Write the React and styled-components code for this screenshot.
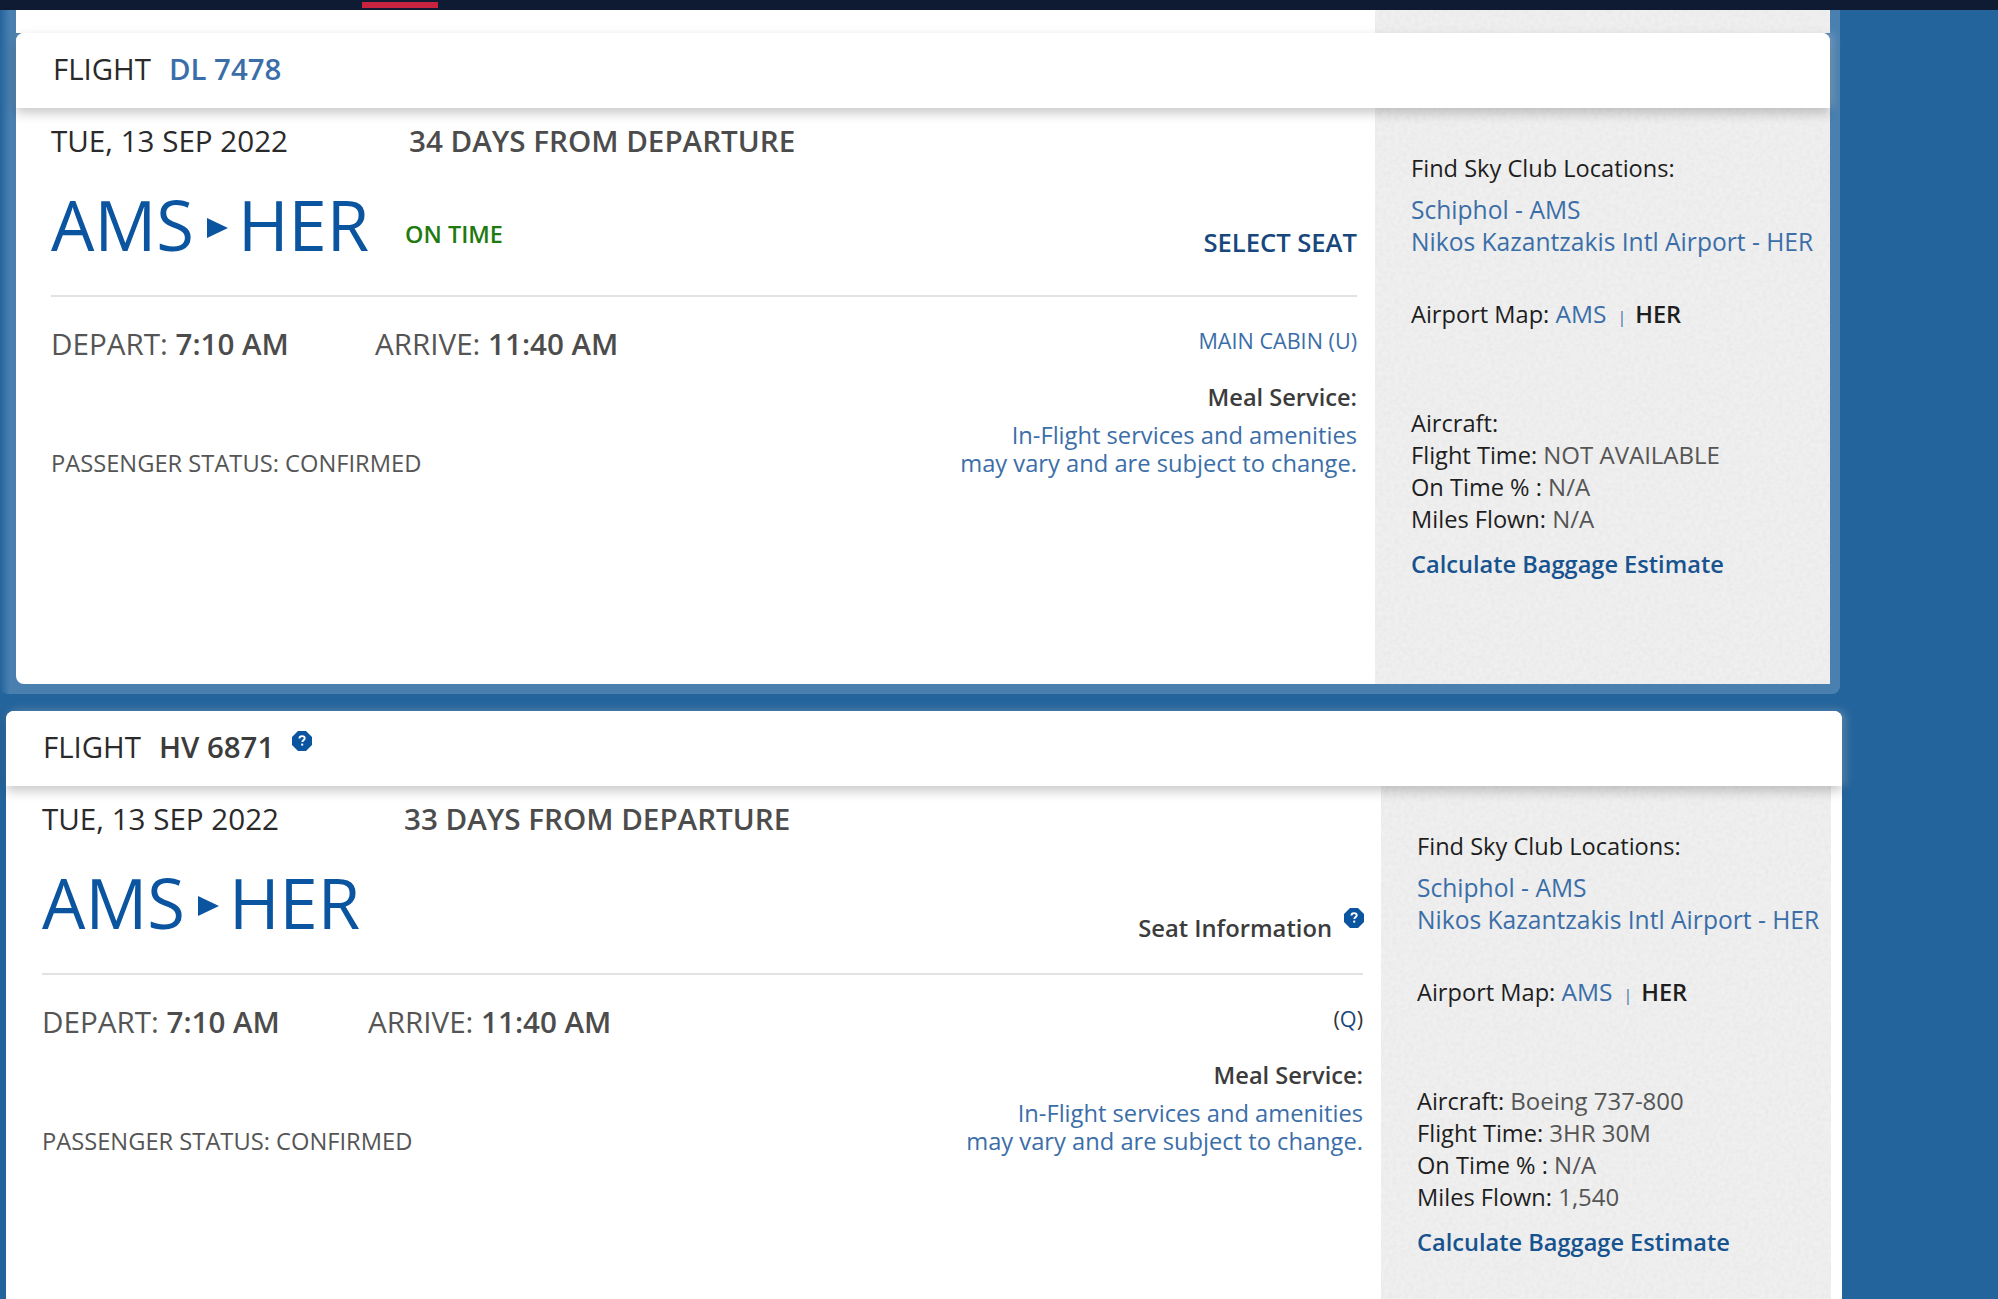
import { createGlobalStyle, styled } from "styled-components";

const GlobalStyle = createGlobalStyle`
  html, body { margin: 0; padding: 0; height: 100%; overflow: hidden; background: #24649c; }
  body { font-family: "Open Sans", "Liberation Sans", sans-serif; color: #222; }
  * { box-sizing: border-box; }
`;

const noise = `url("data:image/svg+xml,%3Csvg xmlns='http://www.w3.org/2000/svg' width='240' height='240'%3E%3Cfilter id='n'%3E%3CfeTurbulence type='fractalNoise' baseFrequency='.25' numOctaves='3'/%3E%3CfeColorMatrix values='0 0 0 0 .5 0 0 0 0 .5 0 0 0 0 .5 0 0 0 .22 -.06'/%3E%3C/filter%3E%3Crect width='240' height='240' filter='url(%23n)'/%3E%3C/svg%3E")`;

const Page = styled.div`
  height: 1299px;
  overflow: hidden;
  background: #24649c;
`;

const TopBar = styled.div`
  height: 10px;
  background: #0f1a33;
  padding: 2px 0 0 362px;
`;

const RedTab = styled.div`
  width: 76px;
  height: 6px;
  background: #c8233f;
`;

const Wrapper = styled.div`
  width: 1840px;
  padding: 0 10px 10px 16px;
  background: linear-gradient(90deg, #24649c 0, #4a80b0 10px);
  border-radius: 0 0 8px 8px;
`;

const PrevCard = styled.div`
  display: grid;
  grid-template-columns: 1359px 1fr;
  height: 23px;
  background: #fff;
`;

const Textured = styled.div`
  background-color: #f0f0f0;
  background-image: ${noise};
`;

const Card = styled.section`
  width: ${(p) => p.$width}px;
  margin: ${(p) => p.$margin};
  background: #fff;
  border-radius: 8px;
`;

const CardHeader = styled.header`
  display: flex;
  align-items: center;
  height: 75px;
  padding: 0 0 3px ${(p) => p.$indent}px;
  background: #fff;
  border-radius: 8px 8px 0 0;
  box-shadow: 0 5px 12px rgba(0, 0, 0, 0.22), 3px 0 10px rgba(255, 255, 255, 0.3);
  position: relative;
  font-size: 29.4px;
  color: #2a2a2a;
`;

const FlightLabel = styled.span`
  margin-right: 18px;
`;

const FlightNumber = styled.span`
  font-weight: 600;
  color: ${(p) => (p.$link ? "#3b6ea8" : "#3c3c3c")};
`;

const HeaderHelp = styled.span`
  display: inline-flex;
  margin: -13px 0 0 18px;
`;

const CardBody = styled.div`
  display: grid;
  grid-template-columns: ${(p) => p.$columns};
  min-height: ${(p) => p.$height}px;
  border-radius: 0 0 8px 8px;
`;

const Main = styled.div`
  padding: 12px 18px 0 ${(p) => p.$indent}px;
`;

const DateRow = styled.div`
  display: flex;
  align-items: center;
  height: 40px;
  font-size: 29.6px;
`;

const DateText = styled.div`
  width: ${(p) => p.$width}px;
  color: #2a2a2a;
`;

const DaysText = styled.div`
  font-weight: 600;
  color: #4c4c4c;
`;

const RouteRow = styled.div`
  display: flex;
  align-items: center;
  justify-content: space-between;
  height: 125px;
  margin-top: 12px;
  border-bottom: 2px solid #e2e2e2;
  padding-bottom: 17px;
`;

const Route = styled.div`
  display: flex;
  align-items: center;
  font-size: 68.7px;
  line-height: 1;
  color: #0b55a0;
`;

const RouteArrow = styled.svg`
  width: 23px;
  height: 24px;
  margin: 6px 9px 0 12px;
`;

const OnTime = styled.span`
  margin: 19px 0 0 36px;
  font-size: 23.4px;
  line-height: 32px;
  font-weight: 600;
  color: #1f7a0f;
`;

const SelectSeat = styled.div`
  margin-top: 34px;
  font-size: 25.6px;
  font-weight: 600;
  color: #17477c;
`;

const SeatInfo = styled.div`
  display: flex;
  margin-top: 49px;
  font-size: 23.75px;
  font-weight: 600;
  color: #3c3c3c;
`;

const SeatHelp = styled.span`
  display: inline-flex;
  margin: -4px -1px 0 12px;
`;

const TimesRow = styled.div`
  display: flex;
  align-items: center;
  justify-content: space-between;
  height: 46px;
  margin-top: 23px;
`;

const Times = styled.div`
  display: flex;
  font-size: 29.6px;
  color: #555;
`;

const Time = styled.div`
  width: ${(p) => p.$width}px;
  b { font-weight: 600; color: #4c4c4c; }
`;

const CabinLink = styled.div`
  margin-top: -6px;
  font-size: 21.6px;
  color: ${(p) => (p.$dark ? "#17477c" : "#3b6ea8")};
  span { color: #333; }
`;

const DetailRow = styled.div`
  display: flex;
  justify-content: space-between;
  align-items: flex-end;
  margin-top: 13px;
`;

const Status = styled.div`
  margin-bottom: -2px;
  font-size: 23.7px;
  line-height: 32px;
  color: #555;
`;

const Meal = styled.div`
  text-align: right;
`;

const MealTitle = styled.div`
  margin-bottom: 6px;
  font-size: 23.6px;
  line-height: 36px;
  font-weight: 600;
  color: #3c3c3c;
`;

const MealNote = styled.div`
  font-size: 23.7px;
  line-height: 28px;
  color: #3b6ea8;
`;

const Side = styled(Textured)`
  margin-right: ${(p) => p.$gap}px;
  padding: 44px 0 0 36px;
  font-size: 23.6px;
  line-height: 32px;
  color: #1e1e1e;
`;

const SideLink = styled.div`
  font-size: 24.6px;
  color: #3b6ea8;
  font-weight: 500;
`;

const SideLinks = styled.div`
  margin-top: 10px;
`;

const MapRow = styled.div`
  margin-top: 40px;
  a { font-size: 24.5px; color: #3b6ea8; font-weight: 500; }
  i { margin: 0 9px 0 11px; font-style: normal; font-size: 16px; color: #3b6ea8; }
  b { font-weight: 600; }
`;

const Stats = styled.div`
  margin-top: 74px;
  span { font-size: 24px; color: #555; }
`;

const Baggage = styled.div`
  margin-top: 13px;
  font-weight: 600;
  color: #17538f;
`;

const HelpIcon = () => (
  <svg width="20" height="20" viewBox="0 0 20 20">
    <path d="M6 0h8l6 6v8l-6 6H6l-6-6V6z" fill="#0b55a0" />
    <circle cx="10" cy="10" r="8.6" fill="#0b55a0" />
    <path d="M7.4 7.6c0-1.6 1.2-2.5 2.7-2.5s2.6.9 2.6 2.2c0 2-2.4 1.9-2.4 3.7" fill="none" stroke="#fff" strokeWidth="1.9" />
    <rect x="9.2" y="12.6" width="2" height="2" fill="#fff" />
  </svg>
);

const Arrow = () => (
  <RouteArrow viewBox="0 0 23 24">
    <path d="M1 2l21 10L1 22z" fill="#0b55a0" />
  </RouteArrow>
);

const flights = [
  {
    number: "DL 7478",
    link: true,
    days: "34 DAYS FROM DEPARTURE",
    aircraft: "",
    flightTime: "NOT AVAILABLE",
    miles: "N/A",
    width: 1814,
    margin: "0",
    columns: "1359px 1fr",
    height: 576,
    headerIndent: 37,
    mainIndent: 35,
    dateWidth: 358,
    departWidth: 324,
    sideGap: 0,
  },
  {
    number: "HV 6871",
    help: true,
    days: "33 DAYS FROM DEPARTURE",
    aircraft: "Boeing 737-800",
    flightTime: "3HR 30M",
    miles: "1,540",
    width: 1836,
    margin: "17px 0 0 6px",
    columns: "1375px 1fr",
    height: 520,
    headerIndent: 37,
    mainIndent: 36,
    dateWidth: 362,
    departWidth: 326,
    sideGap: 11,
  },
];

const FlightCard = ({ flight }) => (
  <Card $width={flight.width} $margin={flight.margin}>
    <CardHeader $indent={flight.headerIndent}>
      <FlightLabel>FLIGHT</FlightLabel>
      <FlightNumber $link={flight.link}>{flight.number}</FlightNumber>
      {flight.help && (
        <HeaderHelp>
          <HelpIcon />
        </HeaderHelp>
      )}
    </CardHeader>
    <CardBody $columns={flight.columns} $height={flight.height}>
      <Main $indent={flight.mainIndent}>
        <DateRow>
          <DateText $width={flight.dateWidth}>TUE, 13 SEP 2022</DateText>
          <DaysText>{flight.days}</DaysText>
        </DateRow>
        <RouteRow>
          <Route>
            AMS
            <Arrow />
            HER
            {flight.link && <OnTime>ON TIME</OnTime>}
          </Route>
          {flight.link ? (
            <SelectSeat>SELECT SEAT</SelectSeat>
          ) : (
            <SeatInfo>
              Seat Information
              <SeatHelp>
                <HelpIcon />
              </SeatHelp>
            </SeatInfo>
          )}
        </RouteRow>
        <TimesRow>
          <Times>
            <Time $width={flight.departWidth}>
              DEPART: <b>7:10 AM</b>
            </Time>
            <Time>
              ARRIVE: <b>11:40 AM</b>
            </Time>
          </Times>
          {flight.link ? (
            <CabinLink>MAIN CABIN (U)</CabinLink>
          ) : (
            <CabinLink $dark>
              <span>(</span>Q<span>)</span>
            </CabinLink>
          )}
        </TimesRow>
        <DetailRow>
          <Status>PASSENGER STATUS: CONFIRMED</Status>
          <Meal>
            <MealTitle>Meal Service:</MealTitle>
            <MealNote>
              In-Flight services and amenities
              <br />
              may vary and are subject to change.
            </MealNote>
          </Meal>
        </DetailRow>
      </Main>
      <Side $gap={flight.sideGap}>
        <div>Find Sky Club Locations:</div>
        <SideLinks>
          <SideLink>Schiphol - AMS</SideLink>
          <SideLink>Nikos Kazantzakis Intl Airport - HER</SideLink>
        </SideLinks>
        <MapRow>
          Airport Map: <a>AMS</a>
          <i>|</i>
          <b>HER</b>
        </MapRow>
        <Stats>
          <div>
            Aircraft: <span>{flight.aircraft}</span>
          </div>
          <div>
            Flight Time: <span>{flight.flightTime}</span>
          </div>
          <div>
            On Time % : <span>N/A</span>
          </div>
          <div>
            Miles Flown: <span>{flight.miles}</span>
          </div>
        </Stats>
        <Baggage>Calculate Baggage Estimate</Baggage>
      </Side>
    </CardBody>
  </Card>
);

export default function App() {
  return (
    <Page>
      <GlobalStyle />
      <TopBar>
        <RedTab />
      </TopBar>
      <Wrapper>
        <PrevCard>
          <div />
          <Textured />
        </PrevCard>
        <FlightCard flight={flights[0]} />
      </Wrapper>
      <FlightCard flight={flights[1]} />
    </Page>
  );
}
